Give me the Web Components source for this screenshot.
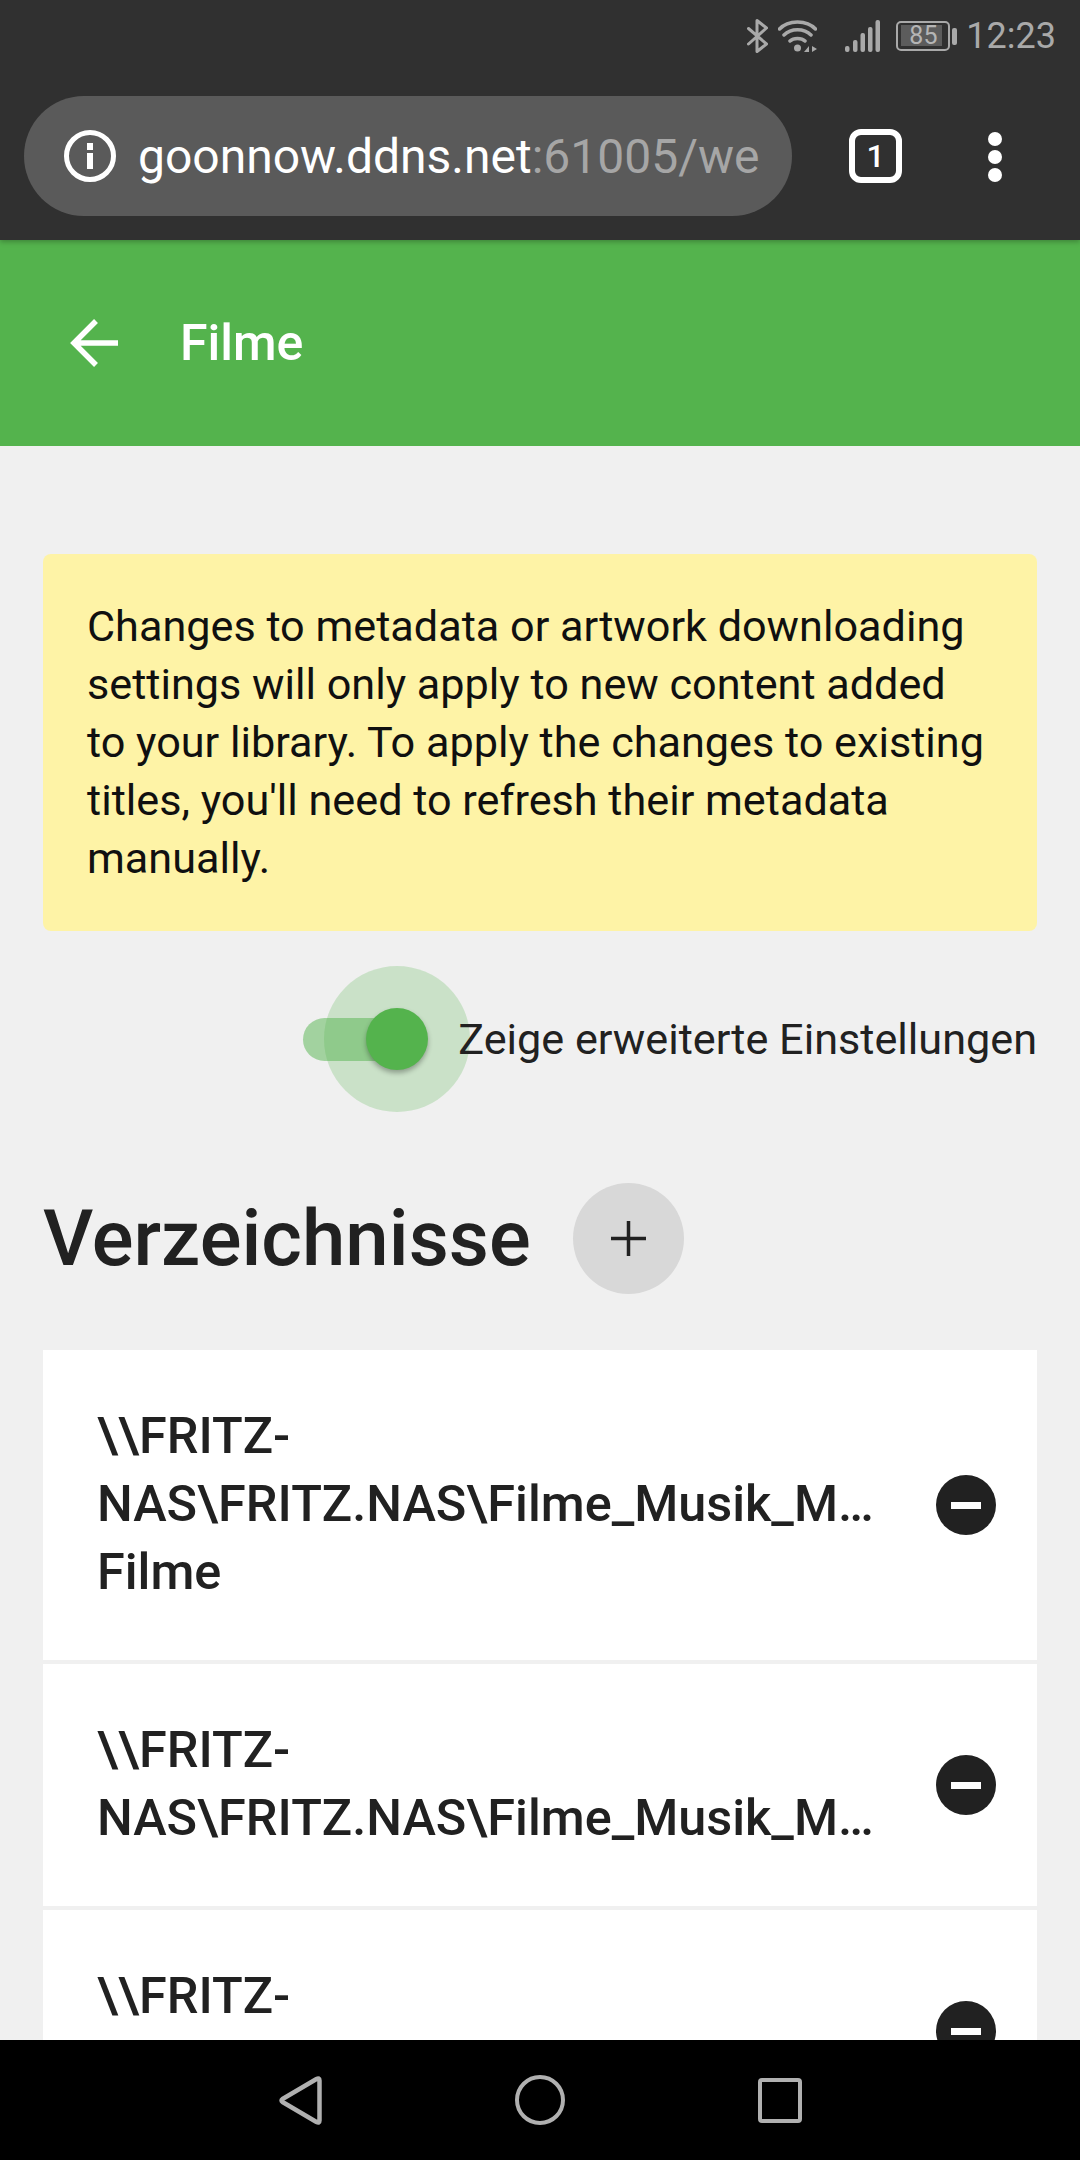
<!DOCTYPE html>
<html lang="de">
<head>
<meta charset="utf-8">
<title>Filme</title>
<style>
  html, body { margin: 0; height: 100%; }
  body { font-family: Roboto, "Liberation Sans", sans-serif; background: #f0f0f0; }
  #page { display: flex; flex-direction: column; height: 2160px; overflow: hidden; }
  #content { flex: 1; min-height: 0; overflow: hidden; padding: 108px 43px 0; display: flex; flex-direction: column; }
</style>
</head>
<body>
<div id="page">
  <browser-chrome url="goonnow.ddns.net" rest=":61005/we" tabs="1"></browser-chrome>
  <app-header>Filme</app-header>
  <div id="content">
    <notice-box>Changes to metadata or artwork downloading settings will only apply to new content added to your library. To apply the changes to existing titles, you'll need to refresh their metadata manually.</notice-box>
    <toggle-row>Zeige erweiterte Einstellungen</toggle-row>
    <section-title>Verzeichnisse</section-title>
    <path-list>
      <path-row><span>\\FRITZ-</span><span>NAS\FRITZ.NAS\Filme_Musik_Medien\Filme</span><span>Filme</span></path-row>
      <path-row><span>\\FRITZ-</span><span>NAS\FRITZ.NAS\Filme_Musik_Medien\Serien</span></path-row>
      <path-row><span>\\FRITZ-</span><span>NAS\FRITZ.NAS\Filme_Musik_Medien\Kinder</span></path-row>
    </path-list>
  </div>
  <nav-bar></nav-bar>
</div>

<script>
function define(name, markup, extra) {
  const template = document.createElement('template');
  template.innerHTML = markup;
  class Element extends HTMLElement {
    constructor() {
      super();
      this.attachShadow({mode: 'open'}).appendChild(template.content.cloneNode(true));
    }
    connectedCallback() {
      if (extra) extra(this);
    }
  }
  customElements.define(name, Element);
}

define('browser-chrome', `
  <style>
    :host { display: block; flex: none; height: 240px; background: #303030; position: relative; z-index: 2; box-shadow: 0 2px 5px rgba(0,0,0,.25); }
    .status { height: 72px; padding: 0 24px 0 0; box-sizing: border-box; display: flex; align-items: center; justify-content: flex-end; color: #a9a9a9; }
    .status svg { display: block; flex: none; }
    .bt { margin-right: 10px; }
    .wifi { margin-right: 28px; }
    .signal { margin-right: 16px; }
    .battery { position: relative; width: 61px; height: 30px; margin-right: 9px; }
    .battery b { position: absolute; left: 13px; top: 1px; font: 400 25px/28px Roboto, sans-serif; color: #b5b5b5; }
    .clock { font-size: 36px; line-height: 42px; }
    .bar { height: 168px; display: flex; align-items: flex-start; padding-top: 24px; box-sizing: border-box; }
    .omni { margin-left: 24px; width: 768px; height: 120px; flex: none; box-sizing: border-box; border-radius: 60px; background: #5a5a5a; display: flex; align-items: center; padding-left: 40px; }
    .url { margin-left: 22px; font-size: 48px; color: #fff; white-space: nowrap; overflow: hidden; width: 622px; }
    .url i { font-style: normal; color: #a6a6a6; }
    .tabs { margin: 33px 0 0 57px; width: 53px; height: 54px; box-sizing: border-box; border: 6px solid #fff; border-radius: 12px; color: #fff; font: 500 32px/42px Roboto, sans-serif; text-align: center; }
    .menu { margin: 36px 0 0 86px; display: flex; flex-direction: column; gap: 4px; }
    .menu span { width: 14px; height: 14px; border-radius: 50%; background: #fff; }
  </style>
  <div class="status">
    <svg class="bt" width="21" height="34" viewBox="0 0 21 34" fill="none" stroke="#a9a9a9" stroke-width="3" stroke-linecap="round" stroke-linejoin="round"><path d="M1.500 9.500 19.500 25 10 32.500V1.500L19.500 9 1.500 25"/></svg>
    <svg class="wifi" width="39" height="33" viewBox="0 0 39 33" fill="none" stroke="#a9a9a9" stroke-width="3.500" stroke-linecap="round"><path d="M1.500 9C10 -.5 29 -.5 37.500 9M6 15C13 8 26 8 33 15M12 21C15.500 17.500 23.500 17.500 27 21"/><circle cx="19.500" cy="28" r="3.500" fill="#a9a9a9" stroke="none"/><path d="M26 32l5-6v6zM34 26l5 3-5 3z" fill="#a9a9a9" stroke="none"/></svg>
    <svg class="signal" width="35" height="32" viewBox="0 0 35 32" fill="#a9a9a9"><rect x="0" y="26" width="4.500" height="6" rx="2"/><rect x="8" y="20" width="4.500" height="12" rx="2"/><rect x="15.500" y="13" width="4.500" height="19" rx="2"/><rect x="23" y="7" width="4.500" height="25" rx="2"/><rect x="30.500" y="0" width="4.500" height="32" rx="2"/></svg>
    <div class="battery">
      <svg width="61" height="30" viewBox="0 0 61 30"><rect x="1" y="1" width="52" height="28" rx="4" fill="none" stroke="#a9a9a9" stroke-width="2"/><rect x="5" y="4" width="41" height="21" fill="#5c5c5c"/><rect x="56" y="7" width="5" height="17" rx="2" fill="#a9a9a9"/></svg>
      <b>85</b>
    </div>
    <span class="clock">12:23</span>
  </div>
  <div class="bar">
    <div class="omni">
      <svg width="52" height="52" viewBox="0 0 52 52"><circle cx="26" cy="26" r="23.500" fill="none" stroke="#fff" stroke-width="5"/><rect x="23" y="23" width="6" height="16" fill="#fff"/><rect x="23" y="13" width="6" height="7" fill="#fff"/></svg>
      <div class="url" id="url"></div>
    </div>
    <div class="tabs" id="tabs"></div>
    <div class="menu"><span></span><span></span><span></span></div>
  </div>
`, el => {
  const root = el.shadowRoot;
  root.getElementById('url').innerHTML = el.getAttribute('url') + '<i>' + el.getAttribute('rest') + '</i>';
  root.getElementById('tabs').textContent = el.getAttribute('tabs');
});

define('app-header', `
  <style>
    :host { display: flex; flex: none; align-items: center; height: 206px; background: #54b34d; color: #fff; box-sizing: border-box; padding-left: 70px; font-size: 50px; font-weight: 500; }
    svg { display: block; margin-right: 61px; }
  </style>
  <svg width="49" height="48" viewBox="0 0 49 48" fill="none" stroke="#fff" stroke-width="5.500"><path d="M48 24H5M26 2 4 24l22 22"/></svg>
  <slot></slot>
`);

define('notice-box', `
  <style>
    :host { display: block; flex: none; background: #fef3a6; border-radius: 8px; padding: 44px 44px 43px; color: #101010; font-size: 43.200px; line-height: 58px; }
  </style>
  <slot></slot>
`);

define('toggle-row', `
  <style>
    :host { display: flex; flex: none; justify-content: flex-end; align-items: center; height: 146px; margin-top: 35px; font-size: 43.200px; color: #212121; white-space: nowrap; }
    .switch { position: relative; width: 155px; height: 146px; flex: none; }
    .track { position: absolute; left: 0; top: 52px; width: 100px; height: 43px; border-radius: 22px; background: rgba(84,179,77,.5); }
    .halo { position: absolute; left: 21px; top: 0; width: 146px; height: 146px; border-radius: 50%; background: rgba(84,179,77,.24); }
    .thumb { position: absolute; left: 63px; top: 42px; width: 62px; height: 62px; border-radius: 50%; background: #54b34d; box-shadow: 0 3px 5px rgba(0,0,0,.3); }
    .label { position: relative; }
  </style>
  <div class="switch"><div class="track"></div><div class="halo"></div><div class="thumb"></div></div>
  <span class="label"><slot></slot></span>
`);

define('section-title', `
  <style>
    :host { display: flex; flex: none; align-items: center; margin-top: 71px; height: 111px; color: #212121; font-size: 78px; font-weight: 500; }
    .add { width: 111px; height: 111px; margin-left: 42px; border-radius: 50%; background: #d8d8d8; display: flex; align-items: center; justify-content: center; }
    svg { display: block; }
  </style>
  <slot></slot>
  <div class="add"><svg width="35" height="35" viewBox="0 0 35 35" stroke="#212121" stroke-width="3.500"><path d="M0 17.500H35M17.500 0V35"/></svg></div>
`);

define('path-list', `
  <style>
    :host { display: flex; flex-direction: column; flex: none; gap: 4px; margin-top: 56px; }
  </style>
  <slot></slot>
`);

define('path-row', `
  <style>
    :host { display: flex; align-items: center; background: #fff; padding: 52px 41px 54px 54px; color: #212121; font-size: 50.400px; font-weight: 500; line-height: 68px; position: relative; }
    .text { flex: 1; min-width: 0; margin-right: 54px; }
    ::slotted(span) { display: block; white-space: nowrap; overflow: hidden; text-overflow: ellipsis; }
    .minus { flex: none; width: 60px; height: 60px; margin-top: 2px; border-radius: 50%; background: #212121; display: flex; align-items: center; justify-content: center; }
    .minus i { width: 30px; height: 7px; background: #fff; }
  </style>
  <div class="text"><slot></slot></div>
  <div class="minus"><i></i></div>
`);

define('nav-bar', `
  <style>
    :host { display: grid; grid-template-columns: repeat(3, 240px); justify-content: center; justify-items: center; align-items: center; flex: none; height: 120px; background: #000; position: relative; z-index: 2; }
    svg { display: block; }
  </style>
  <svg width="43" height="49" viewBox="0 0 43 49" fill="none" stroke="#b0b0b0" stroke-width="4.500" stroke-linejoin="round"><path d="M40.500 4.500V44.500Q40.500 47.500 37.500 46L3.500 26Q1.500 24.500 3.500 23L37.500 3Q40.500 1.500 40.500 4.500Z"/></svg>
  <svg width="50" height="50" viewBox="0 0 50 50" fill="none" stroke="#b0b0b0" stroke-width="4"><circle cx="25" cy="25" r="23"/></svg>
  <svg width="44" height="45" viewBox="0 0 44 45" fill="none" stroke="#b0b0b0" stroke-width="4" stroke-linejoin="round"><rect x="2" y="2" width="40" height="41" rx="2"/></svg>
`);
</script>
</body>
</html>
